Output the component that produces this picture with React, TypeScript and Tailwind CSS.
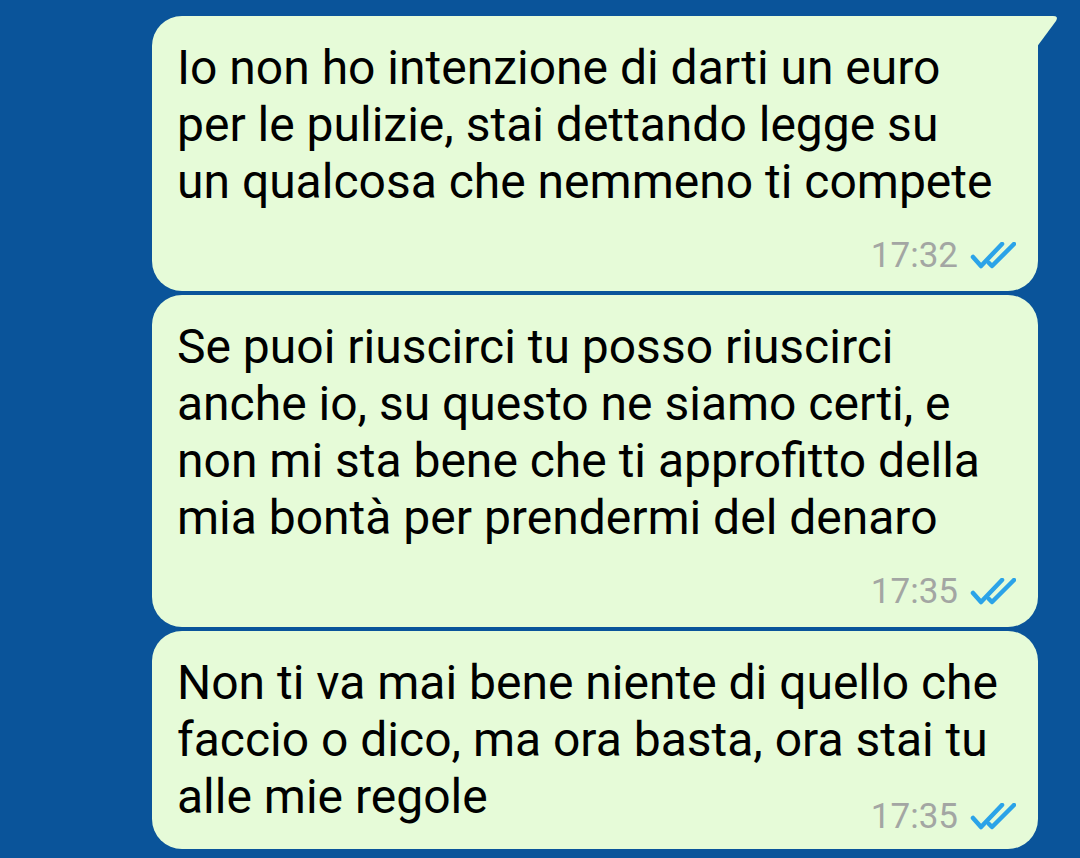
import React from "react";

type Msg = { text: string[]; time: string; inline?: boolean };

const messages: Msg[] = [
  {
    text: [
      "Io non ho intenzione di darti un euro",
      "per le pulizie, stai dettando legge su",
      "un qualcosa che nemmeno ti compete",
    ],
    time: "17:32",
  },
  {
    text: [
      "Se puoi riuscirci tu posso riuscirci",
      "anche io, su questo ne siamo certi, e",
      "non mi sta bene che ti approfitto della",
      "mia bontà per prendermi del denaro",
    ],
    time: "17:35",
  },
  {
    text: [
      "Non ti va mai bene niente di quello che",
      "faccio o dico, ma ora basta, ora stai tu",
      "alle mie regole",
    ],
    time: "17:35",
    inline: true,
  },
];

const Ticks = () => (
  <svg width="46" height="28" viewBox="0 0 46 28" fill="none" stroke="#2ba3e8" strokeWidth="4.5" strokeLinecap="round" strokeLinejoin="round">
    <path d="M3 15 L11 24 L32 2" />
    <path d="M19 21 L22 24 L44 2" />
  </svg>
);

const Tail = () => (
  <svg className="absolute -right-[21px] top-0" width="23" height="32" viewBox="0 0 23 32">
    <path d="M0 0 H17 Q23 0 20 5 L0 32 Z" fill="#e6fbd8" />
  </svg>
);

export default function App() {
  return (
    <div
      className="w-[1080px] h-[858px] overflow-hidden bg-[#0a549a] pt-4"
      style={{ fontFamily: "Roboto, 'Noto Sans', sans-serif" }}
    >
      <div className="ml-[152px] w-[886px] flex flex-col gap-1">
        {messages.map((m, i) => (
          <div
            key={i}
            className={`relative bg-[#e6fbd8] rounded-[30px] pl-[25px] pr-[22px] pt-[23px] ${
              i === 0 ? "rounded-tr-none" : ""
            } ${m.inline ? "pb-[12px]" : "pb-[15px]"}`}
          >
            {i === 0 && <Tail />}
            <div className="text-[48px] leading-[57px] text-black">
              {m.text.map((l, j) => (
                <div key={j}>{l}</div>
              ))}
            </div>
            <div className={`flex items-center justify-end gap-3 ${m.inline ? "-mt-[28px]" : "mt-[26px]"}`}>
              <span className="text-[35px] leading-[40px] text-[#a3a6a3]">{m.time}</span>
              <Ticks />
            </div>
          </div>
        ))}
      </div>
    </div>
  );
}
